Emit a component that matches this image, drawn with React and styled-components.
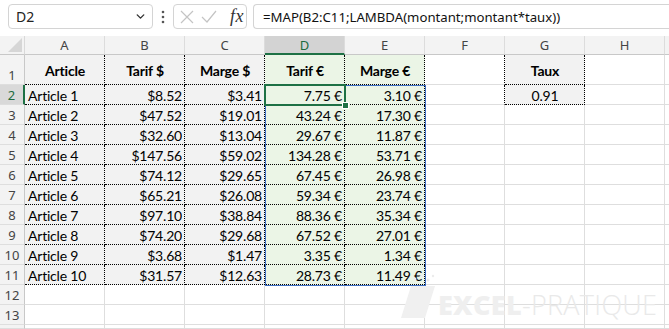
import React from "react";
import styled, { createGlobalStyle } from "styled-components";
import { ChevronDown } from "lucide-react";

const GlobalStyle = createGlobalStyle`
  html, body {
    margin: 0;
    padding: 0;
    background: #ffffff;
    overflow: hidden;
  }
  * { box-sizing: border-box; }
`;

const COLS = ["A", "B", "C", "D", "E", "F", "G", "H"];

const DATA = [
  ["Article 1", "$8.52", "$3.41", "7.75 €", "3.10 €"],
  ["Article 2", "$47.52", "$19.01", "43.24 €", "17.30 €"],
  ["Article 3", "$32.60", "$13.04", "29.67 €", "11.87 €"],
  ["Article 4", "$147.56", "$59.02", "134.28 €", "53.71 €"],
  ["Article 5", "$74.12", "$29.65", "67.45 €", "26.98 €"],
  ["Article 6", "$65.21", "$26.08", "59.34 €", "23.74 €"],
  ["Article 7", "$97.10", "$38.84", "88.36 €", "35.34 €"],
  ["Article 8", "$74.20", "$29.68", "67.52 €", "27.01 €"],
  ["Article 9", "$3.68", "$1.47", "3.35 €", "1.34 €"],
  ["Article 10", "$31.57", "$12.63", "28.73 €", "11.49 €"],
];

const Page = styled.div`
  width: 669px;
  height: 329px;
  overflow: hidden;
  background: #ffffff;
  font-family: Lato, "Liberation Sans", sans-serif;
`;

const FormulaBar = styled.div`
  height: 36px;
  display: flex;
  align-items: flex-start;
  padding: 4px 0 0 8px;
  background: #ffffff;
`;

const NameBox = styled.div`
  width: 145px;
  height: 25px;
  border: 1px solid #d4d4d4;
  border-radius: 4px;
  background: #fff;
  display: flex;
  align-items: center;
  justify-content: space-between;
  padding: 0 5px 0 7px;
  font-family: "Noto Sans", sans-serif;
  font-size: 14px;
  color: #222;
`;

const Dots = styled.div`
  width: 20px;
  height: 25px;
  display: flex;
  align-items: center;
  justify-content: center;
`;

const FxBox = styled.div`
  width: 74px;
  height: 25px;
  border: 1px solid #d4d4d4;
  border-radius: 4px;
  background: #fff;
  display: flex;
  align-items: center;
  padding: 0 0 0 6px;
  gap: 7px;
`;

const Fx = styled.span`
  font-family: "Liberation Serif", serif;
  font-style: italic;
  font-size: 18px;
  color: #333;
  margin-left: 6px;
  letter-spacing: 0.5px;
`;

const FormulaInput = styled.div`
  flex: 1;
  height: 25px;
  margin-left: 6px;
  border: 1px solid #d4d4d4;
  border-right: none;
  border-radius: 4px 0 0 4px;
  background: #fff;
  display: flex;
  align-items: center;
  padding-left: 9px;
  font-family: "Noto Sans", sans-serif;
  font-size: 13.2px;
  color: #111;
`;

const Sheet = styled.div`
  position: relative;
  display: grid;
  grid-template-columns: 25px repeat(8, 80px) 1fr;
  grid-template-rows: 19px 30px repeat(12, 20px) 1fr;
  height: 293px;
`;

const Corner = styled.div`
  background: #f3f3f3;
  border-right: 1px solid #d9d9d9;
  border-bottom: 1px solid #c8c8c8;
  display: flex;
  align-items: flex-end;
  justify-content: flex-end;
  padding: 0 2px 2px 0;
`;

const ColHead = styled.div`
  background: ${(p) => (p.$active ? "#d3d3d3" : "#f3f3f3")};
  color: ${(p) => (p.$active ? "#1d6b3d" : "#444")};
  border-right: 1px solid #dcdcdc;
  border-bottom: ${(p) => (p.$active ? "2px solid #1e7145" : "1px solid #c8c8c8")};
  font-family: "Noto Sans", sans-serif;
  font-size: 13px;
  display: flex;
  align-items: center;
  justify-content: center;
  padding-top: ${(p) => (p.$active ? "1px" : "0")};
`;

const RowHead = styled.div`
  background: ${(p) => (p.$active ? "#d9d9d9" : "#f3f3f3")};
  color: ${(p) => (p.$active ? "#1d6b3d" : "#444")};
  border-right: ${(p) => (p.$active ? "2px solid #1e7145" : "1px solid #c8c8c8")};
  border-bottom: 1px solid #dedede;
  font-family: "Noto Sans", sans-serif;
  font-size: 13px;
  display: flex;
  align-items: flex-end;
  justify-content: center;
  padding-bottom: 0;
  line-height: 17px;
`;

const Cell = styled.div`
  background: ${(p) => p.$fill || "#fff"};
  border-right: ${(p) => (p.$dotR ? "1px dotted #000" : "1px solid #dedede")};
  border-bottom: ${(p) => (p.$dotB ? "1px dotted #000" : "1px solid #dedede")};
  display: flex;
  align-items: ${(p) => (p.$bold ? "center" : "flex-end")};
  justify-content: ${(p) =>
    p.$align === "right" ? "flex-end" : p.$align === "center" ? "center" : "flex-start"};
  padding: ${(p) => (p.$bold ? "2px" : "0")} 2px 0 3px;
  font-size: 14px;
  letter-spacing: -0.2px;
  line-height: 17px;
  font-weight: ${(p) => (p.$bold ? 700 : 400)};
  color: #000;
  white-space: nowrap;
`;

const SpillRange = styled.div`
  position: absolute;
  left: 265px;
  top: 49px;
  width: 161px;
  height: 201px;
  border: 1px solid #3d6fc4;
  pointer-events: none;
`;

const Selection = styled.div`
  position: absolute;
  left: 264px;
  top: 48px;
  width: 82px;
  height: 22px;
  border: 2px solid #1e7145;
  pointer-events: none;
`;

const Handle = styled.div`
  position: absolute;
  right: -5px;
  bottom: -5px;
  width: 7px;
  height: 7px;
  background: #1e7145;
  border: 1px solid #fff;
`;

const Watermark = styled.div`
  position: absolute;
  left: 397px;
  top: 238px;
  display: flex;
  align-items: flex-end;
  gap: 1px;
  pointer-events: none;
`;

const Brand = styled.span`
  font-family: "Open Sans", sans-serif;
  font-size: 27px;
  line-height: 30px;
  letter-spacing: 0.3px;
  margin-bottom: 0;
  b {
    font-weight: 800;
    color: #efefef;
  }
  span {
    font-weight: 300;
    color: #e9e9e9;
  }
`;

const GREEN = "#ebf5e6";
const GRAY = "#f2f2f2";

function cellProps(r, c) {
  // r: 1-based row, c: 0-based col index (A=0)
  const p = {};
  if (r >= 1 && r <= 11 && c <= 2) {
    p.$fill = GRAY;
    p.$dotR = true;
    p.$dotB = true;
  }
  if (r >= 1 && r <= 11 && (c === 3 || c === 4)) {
    p.$fill = GREEN;
    p.$dotR = true;
    p.$dotB = true;
  }
  if ((r === 1 || r === 2) && c === 6) {
    p.$fill = GRAY;
    p.$dotR = true;
    p.$dotB = true;
  }
  if ((r === 1 || r === 2) && c === 5) {
    p.$dotR = true;
  }
  return p;
}

function headerText(c) {
  return ["Article", "Tarif $", "Marge $", "Tarif €", "Marge €", "", "Taux", ""][c];
}

export default function App() {
  const rows = [];
  for (let r = 1; r <= 13; r++) {
    rows.push(
      <RowHead key={`rh${r}`} $active={r === 2}>
        {r}
      </RowHead>
    );
    for (let c = 0; c < 8; c++) {
      const p = cellProps(r, c);
      let text = "";
      let align = "left";
      let bold = false;
      if (r === 1) {
        text = headerText(c);
        align = "center";
        bold = true;
      } else if (r <= 11 && c <= 4) {
        text = DATA[r - 2][c];
        align = c === 0 ? "left" : "right";
      } else if (r === 2 && c === 6) {
        text = "0.91";
        align = "center";
      }
      rows.push(
        <Cell key={`c${r}-${c}`} {...p} $align={align} $bold={bold}>
          {text}
        </Cell>
      );
    }
    rows.push(<Cell key={`x${r}`} />);
  }

  return (
    <Page>
      <GlobalStyle />
      <FormulaBar>
        <NameBox>
          D2
          <ChevronDown size={13} strokeWidth={2.6} color="#333" />
        </NameBox>
        <Dots>
          <svg width="4" height="14" viewBox="0 0 4 14">
            <circle cx="2" cy="2" r="1.3" fill="#555" />
            <circle cx="2" cy="7" r="1.3" fill="#555" />
            <circle cx="2" cy="12" r="1.3" fill="#555" />
          </svg>
        </Dots>
        <FxBox>
          <svg width="14" height="14" viewBox="0 0 14 14">
            <path d="M1 1 L13 13 M13 1 L1 13" stroke="#c4c4c4" strokeWidth="1.2" fill="none" />
          </svg>
          <svg width="16" height="14" viewBox="0 0 16 14">
            <path d="M1 7 L6 12 L15 1" stroke="#c4c4c4" strokeWidth="1.2" fill="none" />
          </svg>
          <Fx>fx</Fx>
        </FxBox>
        <FormulaInput>=MAP(B2:C11;LAMBDA(montant;montant*taux))</FormulaInput>
      </FormulaBar>
      <Sheet>
        <Corner>
          <svg width="14" height="14" viewBox="0 0 14 14">
            <polygon points="14,0 14,14 0,14" fill="#d6d6d6" />
          </svg>
        </Corner>
        {COLS.map((col) => (
          <ColHead key={col} $active={col === "D"}>
            {col}
          </ColHead>
        ))}
        <ColHead />
        {rows}
        <RowHead />
        {Array.from({ length: 9 }).map((_, i) => (
          <Cell key={`last${i}`} />
        ))}
        <SpillRange />
        <Selection>
          <Handle />
        </Selection>
        <Watermark>
          <svg width="40" height="46" viewBox="0 0 40 46">
            <polygon points="14,12 38,12 28,44 4,44" fill="#f0f0f0" />
            <circle cx="18" cy="5" r="1.5" fill="#ececec" />
            <circle cx="25" cy="2" r="1.5" fill="#ececec" />
            <circle cx="31" cy="6" r="1.5" fill="#ececec" />
            <circle cx="36" cy="2" r="1.2" fill="#ececec" />
          </svg>
          <Brand>
            <b>EXCEL</b>
            <span>-PRATIQUE</span>
          </Brand>
        </Watermark>
      </Sheet>
    </Page>
  );
}
